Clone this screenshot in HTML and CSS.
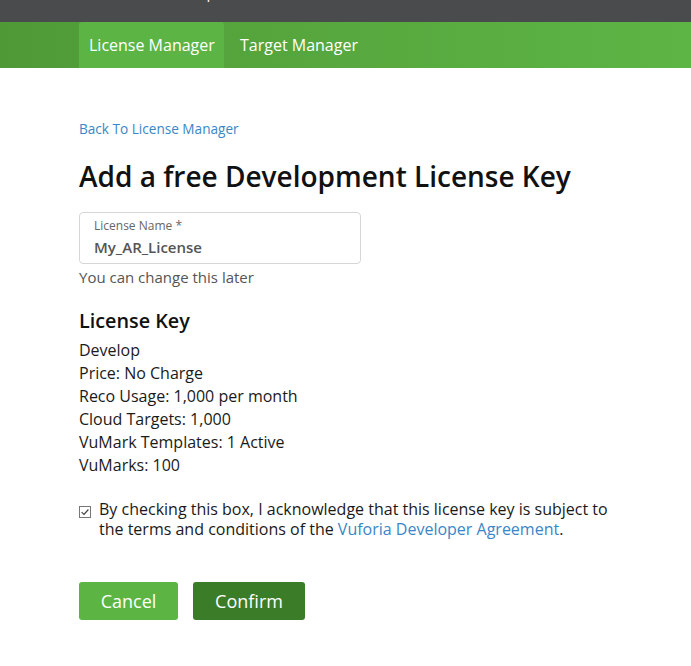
FILE: index.html
```html
<!DOCTYPE html>
<html lang="en">
<head>
<meta charset="utf-8">
<title>Add a free Development License Key</title>
<link rel="stylesheet" href="styles.css">
</head>
<body>
<header class="topbar">
  <div class="topbar-inner"><span class="brand">Vuforia Developer Portal</span></div>
</header>
<nav class="nav">
  <a class="nav-item active" href="#">License Manager</a>
  <a class="nav-item" href="#">Target Manager</a>
</nav>
<main class="content">
  <a class="back" href="#">Back To License Manager</a>
  <h1 class="title">Add a free Development License Key</h1>
  <div class="field">
    <label class="field-label">License Name *</label>
    <div class="field-value">My_AR_License</div>
  </div>
  <p class="hint">You can change this later</p>
  <h2 class="subtitle">License Key</h2>
  <ul class="specs">
    <li>Develop</li>
    <li>Price: No Charge</li>
    <li>Reco Usage: 1,000 per month</li>
    <li>Cloud Targets: 1,000</li>
    <li>VuMark Templates: 1 Active</li>
    <li>VuMarks: 100</li>
  </ul>
  <div class="agree">
    <span class="checkbox"><svg width="12" height="12" viewBox="0 0 12 12"><rect x="0.5" y="0.5" width="11" height="11" fill="#fff" stroke="#767676"/><path d="M2.6 6.1 L5 8.4 L9.4 3.5" fill="none" stroke="#444" stroke-width="1.2"/></svg></span>
    <p class="agree-text">By checking this box, I acknowledge that this license key is subject to the terms and conditions of the <a href="#">Vuforia Developer Agreement</a>.</p>
  </div>
  <div class="actions">
    <button class="btn btn-cancel">Cancel</button>
    <button class="btn btn-confirm">Confirm</button>
  </div>
</main>
</body>
</html>
```
FILE: styles.css
```css
* { box-sizing: border-box; }
html, body { margin: 0; padding: 0; background: #fff; }
body {
  font-family: "Open Sans", "Noto Sans", sans-serif;
  color: #1a1a1a;
}
.topbar {
  height: 22px;
  background: #4a4b4d;
  overflow: hidden;
}
.topbar-inner {
  padding-left: 104px;
  margin-top: -18px;
  line-height: 20px;
  font-size: 15px;
  color: #fff;
  white-space: nowrap;
}
.nav {
  height: 46px;
  display: flex;
  align-items: stretch;
  padding-left: 79px;
  background: linear-gradient(to right, #4f9a37 0%, #57a83e 50%, #5db545 100%);
}
.nav-item {
  display: flex;
  align-items: center;
  padding: 0 16px;
  color: #fff;
  text-decoration: none;
  font-size: 16px;
  white-space: nowrap;
  border-radius: 3px 3px 0 0;
}
.nav-item.active {
  background: #5cb445;
  width: 145px;
  padding: 0 10px;
}
.content {
  padding: 51px 79px 40px 79px;
}
.back {
  display: block;
  color: #3a86c7;
  text-decoration: none;
  font-size: 13.6px;
  line-height: 20px;
}
.title {
  margin: 18px 0 0 0;
  font-size: 28px;
  font-weight: 600;
  line-height: 38px;
  color: #111;
}
.field {
  margin-top: 17px;
  width: 282px;
  height: 52px;
  border: 1px solid #d6d6d6;
  border-radius: 4px;
  padding: 5px 14px 0 14px;
}
.field-label {
  display: block;
  font-size: 12px;
  line-height: 16px;
  color: #666;
}
.field-value {
  margin-top: 2px;
  font-size: 15px;
  font-weight: 600;
  line-height: 22px;
  color: #555;
}
.hint {
  margin: 3px 0 0 0;
  font-size: 15px;
  line-height: 20px;
  color: #555;
}
.subtitle {
  margin: 21px 0 0 0;
  font-size: 19.8px;
  font-weight: 600;
  line-height: 26px;
  color: #111;
}
.specs {
  list-style: none;
  margin: 5px 0 0 0;
  padding: 0;
  font-size: 16px;
  line-height: 23px;
  color: #1a1a1a;
}
.agree {
  margin-top: 22px;
  display: flex;
  gap: 8px;
  align-items: flex-start;
}
.checkbox {
  flex: none;
  width: 12px;
  height: 12px;
  margin-top: 7px;
  display: flex;
}
.agree-text {
  margin: 0;
  font-size: 16px;
  line-height: 20px;
  color: #1a1a1a;
}
.agree-text a {
  color: #3a86c7;
  text-decoration: none;
}
.actions {
  margin-top: 43px;
  display: flex;
  gap: 15px;
}
.btn {
  height: 38px;
  border: none;
  border-radius: 3px;
  font-family: "Open Sans", "Noto Sans", sans-serif;
  font-size: 18px;
  color: #fff;
  padding: 0;
  cursor: pointer;
}
.btn-cancel {
  width: 99px;
  background: #5cb543;
}
.btn-confirm {
  width: 112px;
  background: #3b7c29;
}
```
